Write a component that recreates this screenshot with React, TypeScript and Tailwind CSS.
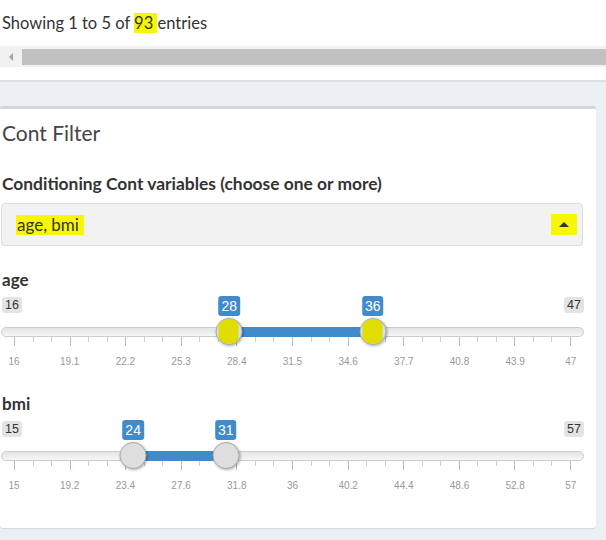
import React from 'react';

interface RangeSliderProps {
  min: number;
  max: number;
  from: number;
  to: number;
  highlight?: boolean;
}

const GRID_LEFT = 13;
const GRID_WIDTH = 556;

const fmt = (v: number) => {
  const r = Math.round(v * 10) / 10;
  return Number.isInteger(r) ? String(r) : r.toFixed(1);
};

const RangeSlider: React.FC<RangeSliderProps> = ({ min, max, from, to, highlight = false }) => {
  const pos = (v: number) => GRID_LEFT + ((v - min) / (max - min)) * GRID_WIDTH;
  const x1 = pos(from);
  const x2 = pos(to);

  return (
    <div className="flex w-[583px] flex-col font-['Liberation_Sans',Arial,sans-serif]">
      {/* min / max labels, value bubbles on top */}
      <div className="relative flex h-[20px] items-start justify-between pt-[1px]">
        <span className="ml-[1px] h-[16px] rounded-[3px] bg-[#e4e4e4] px-[3px] text-[12.5px] leading-[16px] text-[#333]">
          {min}
        </span>
        <span className="h-[16px] rounded-[3px] bg-[#e4e4e4] px-[3px] text-[12.5px] leading-[16px] text-[#333]">
          {max}
        </span>
        {[{ v: from, x: x1 }, { v: to, x: x2 }].map(({ v, x }) => (
          <span
            key={v}
            className="absolute top-0 h-[20px] -translate-x-1/2 rounded-[3px] bg-[#428bca] px-[3px] text-[14px] leading-[20px] text-white"
            style={{ left: x }}
          >
            {v}
          </span>
        ))}
      </div>

      {/* track */}
      <div className="relative mt-[11px] h-[10px] rounded-full border border-[#cccccc] bg-gradient-to-b from-[#e4e4e4] to-[#f7f7f7]">
        <div className="absolute -top-px h-[10px] bg-[#428bca]" style={{ left: x1 - 1, width: x2 - x1 }} />
        {[x1, x2].map((x) => (
          <div
            key={x}
            className="absolute top-[-10px] h-[27px] w-[27px] -translate-x-1/2 overflow-hidden rounded-full border border-[#aaaaaa] bg-[#dedede] shadow-[1px_1px_3px_rgba(0,0,0,0.3)]"
            style={{ left: x - 1 }}
          >
            {highlight && <div className="ml-[2px] mt-[-2px] h-[30px] w-[20px] bg-[#e0dd00]" />}
          </div>
        ))}
      </div>

      {/* grid ticks */}
      <div className="ml-[13px] flex w-[557px] items-start justify-between">
        {Array.from({ length: 31 }, (_, i) => (
          <div key={i} className={i % 3 === 0 ? 'h-[9px] w-px bg-[#99c3e6]' : 'h-[5px] w-px bg-[#cccccc]'} />
        ))}
      </div>

      {/* grid labels */}
      <div className="ml-[-7px] mt-[10px] flex w-[597px] justify-between">
        {Array.from({ length: 11 }, (_, i) => (
          <span key={i} className="w-[40px] text-center text-[10px] leading-[12px] text-[#999999]">
            {fmt(min + ((max - min) * i) / 10)}
          </span>
        ))}
      </div>
    </div>
  );
};

export default function App() {
  return (
    <div className="h-[540px] w-[606px] overflow-hidden bg-[#ecf0f5] font-['Lato','Source_Sans_Pro',sans-serif] text-[#333]">
      {/* table footer */}
      <div className="border-b-2 border-[#dcdfe4] bg-white">
        <div className="flex h-[46px] items-center pl-[2px] text-[16.5px]">
          <p>
            Showing 1 to 5 of <span className="bg-[#f7f700]">93 </span>entries
          </p>
        </div>
        <div className="flex h-[21px] items-center bg-[#f1f1f1]">
          <div className="flex w-[22px] items-center justify-center">
            <div className="h-0 w-0 border-y-[4px] border-r-[4px] border-y-transparent border-r-[#a3a3a3]" />
          </div>
          <div className="h-[16px] flex-1 bg-[#c1c1c1]" />
        </div>
        <div className="h-[13px]" />
      </div>

      {/* box */}
      <div className="mt-[24px] h-[422px] w-[596px] rounded-[3px] border-t-[3px] border-[#d2d6de] bg-white shadow-[0_1px_1px_rgba(0,0,0,0.1)]">
        <div className="flex flex-col pl-[1px] pr-[12px]">
          <h3 className="mt-[12px] pl-[1px] text-[21px] leading-[24px] text-[#444]">Cont Filter</h3>

          <div className="mt-[29px] pl-[1px] text-[17.4px] font-bold leading-[20px]">
            Conditioning Cont variables (choose one or more)
          </div>

          <div className="mt-[9px] flex h-[43px] w-[582px] items-center justify-between rounded-[4px] border border-[#dddddd] bg-[#f2f2f2] pl-[14px] pr-[5px]">
            <span className="bg-[#f7f700] px-[1px] text-[17px] leading-[20px]">age, bmi&nbsp;</span>
            <div className="flex h-[21px] w-[26px] items-center justify-center bg-[#f7f700]">
              <div className="h-0 w-0 border-x-[5px] border-b-[5px] border-x-transparent border-b-[#333]" />
            </div>
          </div>

          <div className="mt-[24px] pl-[1px] text-[17px] font-bold leading-[20px]">age</div>
          <div className="mt-[6px]">
            <RangeSlider min={16} max={47} from={28} to={36} highlight />
          </div>

          <div className="mt-[26px] pl-[1px] text-[17px] font-bold leading-[20px]">bmi</div>
          <div className="mt-[6px]">
            <RangeSlider min={15} max={57} from={24} to={31} />
          </div>
        </div>
      </div>
    </div>
  );
}
